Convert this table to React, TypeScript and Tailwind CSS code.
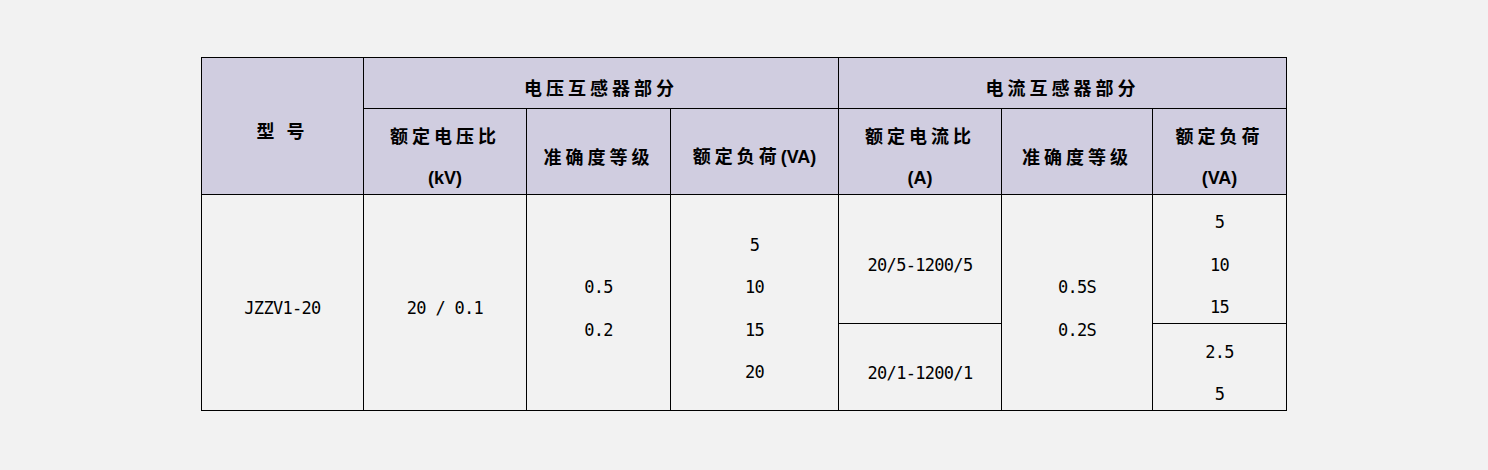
const cjk = '"Noto Sans CJK SC", "Noto Sans", sans-serif';

function Zh({ children }: { children: React.ReactNode }) {
  return (
    <span className="tracking-[4px]" style={{ fontFamily: cjk }}>
      {children}
    </span>
  );
}

function Lat({ children }: { children: React.ReactNode }) {
  return <span className="font-['Liberation_Sans',Arial,sans-serif]">{children}</span>;
}

function Lines({ items }: { items: string[] }) {
  return (
    <div className="translate-y-[6px]">
      {items.map((t, i) => (
        <div key={i}>{t}</div>
      ))}
    </div>
  );
}

const th =
  'border border-black bg-[#d0cde0] p-0 text-center align-middle text-[18px] font-bold leading-[41px] text-black';
const td =
  'border border-black p-0 text-center align-middle font-["DejaVu_Sans_Mono",monospace] text-[17px] tracking-[-0.7px] leading-[42.5px] text-black';

function Head({ children }: { children: React.ReactNode }) {
  return <div className="translate-y-[5px]">{children}</div>;
}

export default function App() {
  return (
    <div className="h-[470px] w-full bg-[#f2f2f2] pt-[57px]">
      <table className="mx-auto w-[1086px] table-fixed border-collapse">
        <colgroup>
          <col className="w-[162px]" />
          <col className="w-[163px]" />
          <col className="w-[144px]" />
          <col className="w-[168px]" />
          <col className="w-[163px]" />
          <col className="w-[151px]" />
          <col className="w-[134px]" />
        </colgroup>
        <thead>
          <tr className="h-[51px]">
            <th rowSpan={2} className={th}>
              <Head>
                <Zh>型 号</Zh>
              </Head>
            </th>
            <th colSpan={3} className={th}>
              <Head>
                <Zh>电压互感器部分</Zh>
              </Head>
            </th>
            <th colSpan={3} className={th}>
              <Head>
                <Zh>电流互感器部分</Zh>
              </Head>
            </th>
          </tr>
          <tr className="h-[86px]">
            <th className={th}>
              <Head>
                <div>
                  <Zh>额定电压比</Zh>
                </div>
                <div>
                  <Lat>(kV)</Lat>
                </div>
              </Head>
            </th>
            <th className={th}>
              <Head>
                <Zh>准确度等级</Zh>
              </Head>
            </th>
            <th className={th}>
              <Head>
                <Zh>额定负荷</Zh>
                <Lat>(VA)</Lat>
              </Head>
            </th>
            <th className={th}>
              <Head>
                <div>
                  <Zh>额定电流比</Zh>
                </div>
                <div>
                  <Lat>(A)</Lat>
                </div>
              </Head>
            </th>
            <th className={th}>
              <Head>
                <Zh>准确度等级</Zh>
              </Head>
            </th>
            <th className={th}>
              <Head>
                <div>
                  <Zh>额定负荷</Zh>
                </div>
                <div>
                  <Lat>(VA)</Lat>
                </div>
              </Head>
            </th>
          </tr>
        </thead>
        <tbody>
          <tr className="h-[129px]">
            <td rowSpan={2} className={td}>
              <Lines items={['JZZV1-20']} />
            </td>
            <td rowSpan={2} className={td}>
              <Lines items={['20 / 0.1']} />
            </td>
            <td rowSpan={2} className={td}>
              <Lines items={['0.5', '0.2']} />
            </td>
            <td rowSpan={2} className={td}>
              <Lines items={['5', '10', '15', '20']} />
            </td>
            <td className={td}>
              <Lines items={['20/5-1200/5']} />
            </td>
            <td rowSpan={2} className={td}>
              <Lines items={['0.5S', '0.2S']} />
            </td>
            <td className={td}>
              <Lines items={['5', '10', '15']} />
            </td>
          </tr>
          <tr className="h-[87px]">
            <td className={td}>
              <Lines items={['20/1-1200/1']} />
            </td>
            <td className={td}>
              <Lines items={['2.5', '5']} />
            </td>
          </tr>
        </tbody>
      </table>
    </div>
  );
}
